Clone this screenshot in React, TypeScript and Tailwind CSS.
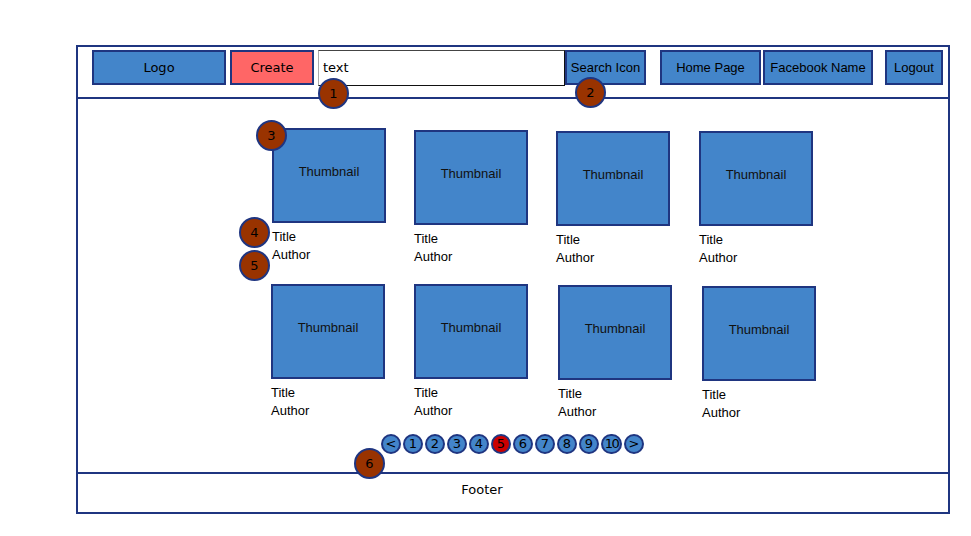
import React from "react";

const DJ = "font-['DejaVu_Sans',sans-serif]";
const LS = "font-['Liberation_Sans',Arial,sans-serif]";

function Btn({ label, className }: { label: string; className: string }) {
  return (
    <div
      className={`h-[35px] flex items-center justify-center border-2 border-[#1f3580] text-[13px] text-black shrink-0 ${className}`}
    >
      {label}
    </div>
  );
}

function Card({ className }: { className: string }) {
  return (
    <div className={`w-[114px] shrink-0 ${className}`}>
      <div className={`w-[114px] h-[95px] bg-[#4385ca] border-2 border-[#1f3580] flex items-center justify-center pb-[8px] text-[13px] text-[#111] ${LS}`}>
        Thumbnail
      </div>
      <div className={`mt-[5px] text-[13px] leading-[18px] text-black ${LS}`}>
        <div>Title</div>
        <div>Author</div>
      </div>
    </div>
  );
}

function Badge({ n, className }: { n: string; className: string }) {
  return (
    <div
      className={`absolute w-[31px] h-[31px] rounded-full bg-[#993300] border-2 border-[#1f3580] flex items-center justify-center text-[13px] text-black ${DJ} ${className}`}
    >
      {n}
    </div>
  );
}

export default function App() {
  const pages = ["<", "1", "2", "3", "4", "5", "6", "7", "8", "9", "10", ">"];
  return (
    <div className="relative w-[971px] h-[536px] bg-white pt-[45px] pl-[76px]">
      <div className="w-[874px] h-[469px] border-2 border-[#1f3580] flex flex-col">
        {/* header */}
        <div className="h-[52px] border-b-2 border-[#1f3580] flex items-start pt-[3px] pl-[14px] shrink-0">
          <Btn label="Logo" className={`w-[134px] bg-[#4385ca] ${DJ}`} />
          <Btn label="Create" className={`w-[84px] ml-[4px] bg-[#ff6666] ${DJ}`} />
          <div
            className={`w-[247px] h-[36px] ml-[4px] bg-white border border-t-[#444] border-l-[#aaa] border-r-[#111] border-b-[#111] flex items-center pl-[4px] text-[13px] text-black shrink-0 ${DJ}`}
          >
            text
          </div>
          <Btn label="Search Icon" className={`w-[81px] ml-0 bg-[#4385ca] ${LS}`} />
          <Btn label="Home Page" className={`w-[101px] ml-[14px] bg-[#4385ca] ${LS}`} />
          <Btn label="Facebook Name" className={`w-[110px] ml-[2px] bg-[#4385ca] ${LS}`} />
          <Btn label="Logout" className={`w-[58px] ml-[12px] bg-[#4385ca] ${LS}`} />
        </div>

        {/* main */}
        <div className="flex-1 flex flex-col pt-[29px]">
          <div className="flex items-start pl-[194px]">
            <Card className="mt-0" />
            <Card className="ml-[28px] mt-[2px]" />
            <Card className="ml-[28px] mt-[3px]" />
            <Card className="ml-[29px] mt-[3px]" />
          </div>
          <div className="flex items-start pl-[193px] mt-[17px]">
            <Card className="mt-0" />
            <Card className="ml-[29px] mt-0" />
            <Card className="ml-[30px] mt-[1px]" />
            <Card className="ml-[30px] mt-[2px]" />
          </div>
          <div className="flex items-center gap-[2px] pl-[303px] mt-[12px]">
            {pages.map((p) => (
              <div
                key={p}
                className={`${p === "10" ? "w-[21px]" : "w-[20px]"} h-[20px] rounded-full border-2 border-[#1f3580] flex items-center justify-center text-black ${DJ} ${
                  p === "10" ? "text-[13px] tracking-[-1.5px]" : "text-[13px]"
                } ${p === "5" ? "bg-[#cc0000]" : "bg-[#4385ca]"}`}
              >
                {p}
              </div>
            ))}
          </div>
        </div>

        {/* footer */}
        <div className={`h-[40px] border-t-2 border-[#1f3580] shrink-0 flex items-center justify-center pr-[62px] pb-[6px] text-[13px] text-black ${DJ}`}>
          Footer
        </div>
      </div>

      <Badge n="1" className="left-[318px] top-[78px]" />
      <Badge n="2" className="left-[575px] top-[77px]" />
      <Badge n="3" className="left-[256px] top-[120px]" />
      <Badge n="4" className="left-[239px] top-[217px]" />
      <Badge n="5" className="left-[239px] top-[250px]" />
      <Badge n="6" className="left-[354px] top-[448px]" />
    </div>
  );
}
